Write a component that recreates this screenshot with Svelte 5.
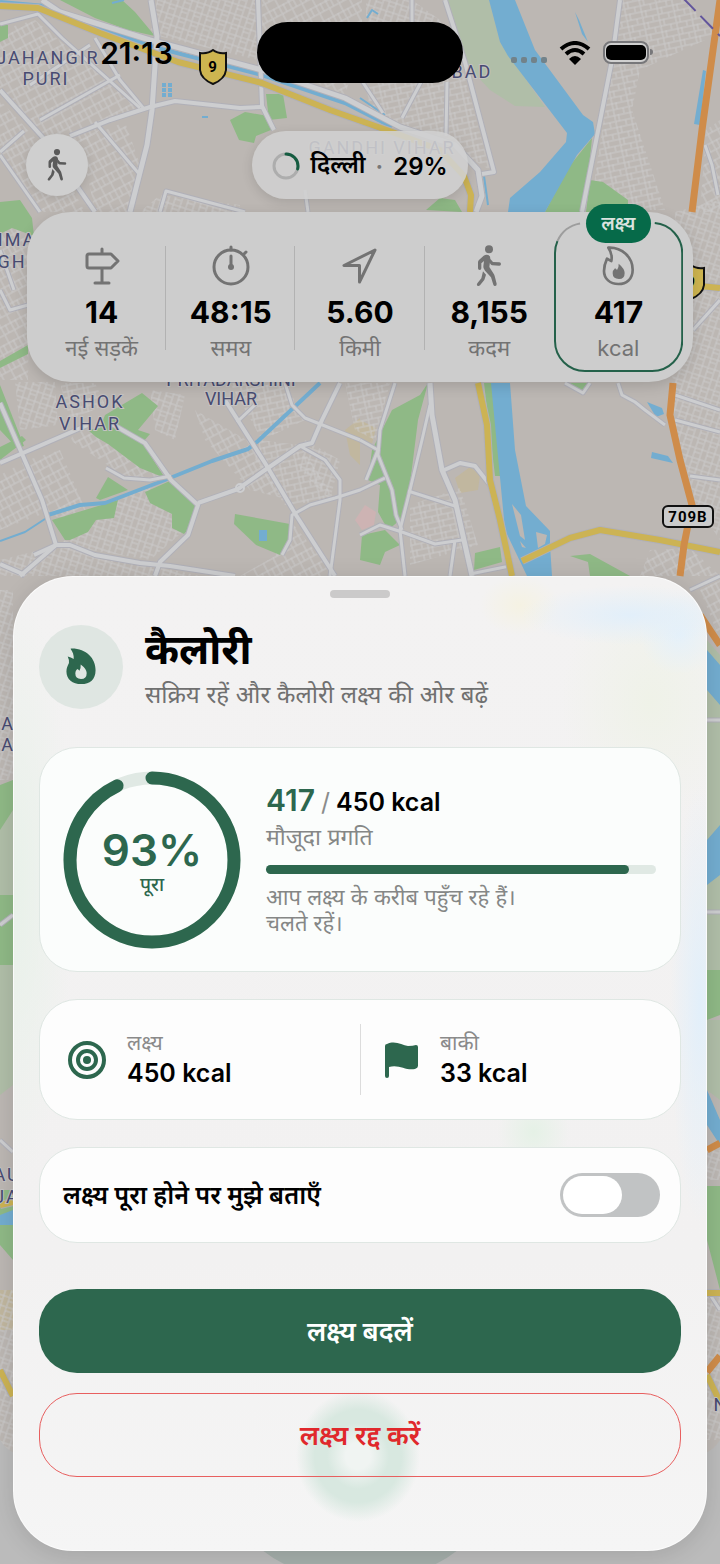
<script>
  const stats = [
    { icon: 'sign', value: '14', label: 'नई सड़कें' },
    { icon: 'watch', value: '48:15', label: 'समय' },
    { icon: 'arrow', value: '5.60', label: 'किमी' },
    { icon: 'walk', value: '8,155', label: 'कदम' },
    { icon: 'flame', value: '417', label: 'kcal', goal: true },
  ];

  const current = 417;
  const target = 450;
  const percent = Math.round((current / target) * 100);
  const cityPercent = 29;

  let notify = $state(false);

  // Map geometry, in map units
  const blocks = [
    { fill: 'streets-a', d: 'M0 30 35 20 140 108 110 118 95 135 60 160 0 90Z' },
    { fill: 'streets-a', d: 'M80 140 125 122 142 170 130 212 95 212Z' },
    { fill: 'streets-a', d: 'M0 100 60 165 85 212H40L0 155Z' },
    { fill: 'streets-b', d: 'M157 0H258V60L150 34Z' },
    { fill: 'streets-a', d: 'M262 0H362V40L345 95 262 60Z' },
    { fill: 'streets-b', d: 'M160 195 240 205V212H140Z' },
    { fill: 'streets-c', d: 'M366 85 460 60 490 170 440 140 370 110Z' },
    { fill: 'streets-b', d: 'M366 0H412L440 20 450 60 366 80Z' },
    { fill: 'streets-c', d: 'M622 0H685L716 35 640 70 632 110 665 210H590Z' },
    { fill: 'streets-a', d: 'M706 130 720 120V212H700Z' },
    { fill: 'streets-a', d: 'M0 210 30 240 28 380 0 380Z' },
    { fill: 'streets-b', d: 'M675 212 720 200V540L696 505 672 415Z' },
    { fill: 'streets-a', d: 'M28 460 60 450 90 520 40 515 0 530V475Z' },
    { fill: 'streets-b', d: 'M15 382 55 382 58 425 20 430Z' },
    { fill: 'streets-c', d: 'M95 383 105 405 70 420 60 383Z' },
    { fill: 'streets-b', d: 'M90 515 150 485 185 530 150 560 60 545Z' },
    { fill: 'streets-a', d: 'M195 410 255 445 290 500 250 490 205 440Z' },
    { fill: 'streets-b', d: 'M150 390 185 395 175 440 155 430Z' },
    { fill: 'streets-c', d: 'M230 383 285 383 305 420 262 440Z' },
    { fill: 'streets-c', d: 'M260 440 300 445 335 500 285 505 255 460Z' },
    { fill: 'streets-b', d: 'M305 440 340 460 330 500 300 470Z' },
    { fill: 'streets-a', d: 'M290 520 335 576H240L275 556Z' },
    { fill: 'streets-c', d: 'M410 505 460 488 478 545 410 565Z' },
    { fill: 'streets-c', d: 'M345 383 390 383 375 440 355 430Z' },
    { fill: 'streets-a', d: 'M80 425 120 445 165 480 130 480 70 440Z' },
    { fill: 'streets-b', d: 'M0 560 60 545 200 576H0Z' },
    { fill: 'streets-a', d: 'M650 550 690 548 720 576H640Z' },
    { fill: 'streets-b', d: 'M0 590H13V780H0Z' },
    { fill: 'streets-a', d: 'M700 590 720 580V640Z' },
    { fill: 'streets-b', d: 'M707 1150H720V1180H707ZM0 1290H13V1450H0ZM707 1290H720V1440H707Z' },
  ];

  const parks = [
    'M60 0H122L135 12 155 36 128 30 95 18Z',
    'M0 25H8V38L0 42Z',
    'M230 120 245 112 268 116 271 130 256 136 254 143 239 140Z',
    'M266 94H283L287 118 269 120Z',
    'M0 202 20 200 32 218 34 236 12 228 0 234Z',
    'M0 361 28 345V354L0 368Z',
    'M0 385 24 446 17 448 0 430Z',
    'M0 447 22 436 26 440 0 460Z',
    'M105 415 142 393 158 406 138 430 150 434 143 442 152 458 165 478 140 468 108 444 96 437 88 430 100 428Z',
    'M96 498 108 477 128 490 100 500Z',
    'M52 520 118 500 114 518 96 520 88 532 70 540 65 540Z',
    'M145 492 172 480 195 505 196 520 184 534 172 528 172 514 150 503Z',
    'M235 514 290 524 288 545 280 555 256 545 234 524Z',
    'M392 410 420 395 428 383 418 420 408 500 400 520 388 530 378 512 380 485 368 480 372 450Z',
    'M362 535 385 530 400 545 385 552 380 565 360 560Z',
    'M484 383H493L502 476 495 476Z',
    'M475 553 500 547 502 562 474 570Z',
    'M570 556 590 554 630 576H590L588 562Z',
    'M592 138 588 180 580 212H545L568 168Z',
    'M590 180 603 182 628 200V212H586Z',
    'M426 210 440 198 455 200 462 212Z',
    'M565 383H590L585 392Z',
    'M0 785 13 780V810L0 830ZM0 895H13V965H0ZM0 1190H13V1260L0 1245Z',
    'M707 970H720V1015L707 1020ZM707 1186H720V1290L707 1240Z',
  ];

  const waters = [
    'M489 0 500 42 508 56 567 133 566 142 540 172 510 198 508 212H545L577 155 595 134 593 122 583 115 535 50 515 0Z',
    'M491 383H510L515 450 526 506 550 531V545L552 576H527L505 530Z',
    'M647 402 662 408 664 414 656 417Z',
    'M652 452 668 456 673 463 651 458Z',
    'M703 70 706 71 700 125 694 124Z',
    'M575 12 579 20 588 42 582 34Z',
    'M259 530H267V541H259Z',
    'M707 650 720 665V705L707 690ZM707 840 720 825V875L707 885ZM707 1090 720 1120V1145L707 1125Z',
    'M0 1215 13 1210V1225H0Z',
  ];

  const roads = [
    { w: 5, d: 'M42 0 60 12 150 40 262 70 345 98 400 127 455 145 478 170 482 196 476 212' },
    { w: 5, d: 'M151 0 157 36 152 110 147 145 130 212' },
    { w: 3, d: 'M0 24 38 14 62 38 140 108' },
    { w: 4, d: 'M70 136 110 120 150 107 175 101 240 108 262 107' },
    { w: 4, d: 'M258 0 262 106 274 130' },
    { w: 4, d: 'M0 90 45 140 95 212' },
    { w: 3, d: 'M0 152 24 131 M0 155 40 212' },
    { w: 3, d: 'M95 38 120 80 145 110 M30 85 90 45 M40 120 120 75 M95 122 140 175' },
    { w: 4, d: 'M445 0 465 62 494 172 482 174' },
    { w: 3, d: 'M412 0V30 M360 78 383 113 M421 82 402 118 M447 82 446 136' },
    { w: 4, d: 'M620 0 612 60 582 212' },
    { w: 3, d: 'M160 212 166 191 245 212 M305 190 308 212' },
    { w: 3, d: 'M705 145 712 165 718 195' },
    { w: 4, d: 'M0 403 42 500 56 545 20 576' },
    { w: 4, d: 'M0 463 90 424 M112 424 145 443 171 480 198 505 188 535 160 562 155 576' },
    { w: 3, d: 'M106 468 124 478 150 480 171 476' },
    { w: 4, d: 'M0 564 25 575 M34 555 56 545 70 545 95 555 140 563 170 566 235 576' },
    { w: 4, d: 'M198 503 238 489 265 470 300 446 312 443 322 420 340 383' },
    { w: 4, d: 'M225 400 265 463 296 515 335 576' },
    { w: 3, d: 'M237 422 257 403 M285 383 292 405 305 418 360 440' },
    { w: 3, d: 'M300 446 325 460 340 480 340 500 330 576' },
    { w: 3, d: 'M282 555 290 540 292 515 310 505 335 498 360 490 385 478' },
    { w: 5, d: 'M430 383 432 415 442 470 455 500 472 576' },
    { w: 3, d: 'M430 405 422 440 410 490 400 530 405 576' },
    { w: 3, d: 'M395 383 380 430 378 455 392 490 396 515 402 530' },
    { w: 3, d: 'M360 440 378 450 366 480 M360 535 380 525 402 532 435 544 462 540 M455 540 450 576' },
    { w: 4, d: 'M442 471 460 463 475 466 490 485' },
    { w: 3, d: 'M408 491 458 507 M470 574 510 566' },
    { w: 3, d: 'M565 383 583 393 590 383 M618 383 622 395 635 402 645 410 665 425' },
    { w: 3, d: 'M675 395 720 410 M675 420 720 432 M690 476 720 480 M690 590 720 576' },
    { w: 3, d: 'M0 290 10 310 28 305 M0 250 14 290 M693 330 720 300' },
    { w: 3, d: 'M0 1140 13 1152 M0 925 13 915 M707 720H720 M707 912H720 M707 1290 720 1310' },
  ];

  const highways = [
    'M0 6 38 8 100 33 178 62 262 83 330 110 395 133 440 150 464 176 471 195 470 212',
    'M478 383 487 425 490 480 500 520 512 576',
    'M522 561 570 538 600 530 660 540 720 552',
    'M690 285 720 288 M0 1370 13 1396 M707 1293H720 M707 1375 720 1402 M0 1205 13 1202',
  ];
</script>

<svelte:head><title>कैलोरी</title></svelte:head>

{#snippet icon(name)}
  {#if name === 'sign'}
    <svg class="icon" viewBox="0 0 44 44" aria-hidden="true">
      <path d="M22 5v4M22 24v14M15 39h14M9 10h22l7 7-7 7H9q-2 0-2-2V12q0-2 2-2Z" />
    </svg>
  {:else if name === 'watch'}
    <svg class="icon" viewBox="0 0 44 44" aria-hidden="true">
      <circle cx="22" cy="23" r="17" />
      <path d="M22 12v11M22 3v3M35 10l2-2" />
      <circle class="solid" cx="22" cy="23" r="3" />
    </svg>
  {:else if name === 'arrow'}
    <svg class="icon" viewBox="0 0 44 44" aria-hidden="true">
      <path d="M37 6 6 21.500h15.500V38Z" />
    </svg>
  {:else if name === 'walk'}
    <svg class="icon" viewBox="-26 -1 132 132" aria-hidden="true">
      <circle class="solid" cx="40" cy="15" r="12" />
      <path class="solid" d="M24 34Q31 29 38 32Q45 35 44 44L41 68L54 88Q56 91 57 95L63 118Q64 124 59 125Q55 126 53 121L46 99L28 79Q22 73 23 66L25 50L17 57V72Q17 77 12 77Q7 77 7 72V54Q7 50 10 47Z" />
      <path class="solid" d="M44 44 52 53 71 54Q76 54 76 59Q76 64 71 64L50 63Q47 63 45 60L40 53Z" />
      <path class="solid" d="M22 81 31 91 27 104Q26 107 24 109L13 123Q9 127 5 124Q2 121 5 117L17 102Z" />
    </svg>
  {:else}
    <svg class="icon" viewBox="0 0 132 132" aria-hidden="true">
      <path class="flame-line" d="M37 11C78 9 110 40 110 77C110 106 91 120 67 120C42 120 24 104 24 81C24 65 28 55 33 44Q39 48 46 51C49 36 46 24 37 11Z" />
      <path class="solid" d="M68 59Q86 74 86 87Q86 105 69 105Q50 105 50 88Q50 79 57 73Q61 75 63 78Q69 71 68 59Z" />
    </svg>
  {/if}
{/snippet}

<div class="screen">
  <svg class="map" viewBox="0 0 720 1564" preserveAspectRatio="xMidYMin slice" aria-hidden="true">
    <defs>
      <pattern id="streets-a" width="11" height="17" patternUnits="userSpaceOnUse" patternTransform="rotate(-28)">
        <path d="M0 1H11M1 0V17M1 9H11M6 0V9" />
      </pattern>
      <pattern id="streets-b" width="13" height="10" patternUnits="userSpaceOnUse" patternTransform="rotate(18)">
        <path d="M0 1H13M1 0V10M7 5H13M7 1V10" />
      </pattern>
      <pattern id="streets-c" width="16" height="12" patternUnits="userSpaceOnUse" patternTransform="rotate(-12)">
        <path d="M0 1H16M1 0V12M5 0V7M1 7H16M11 7V12" />
      </pattern>
    </defs>
    <rect width="720" height="1564" fill="#bcb7b3" />
    <path fill="#b0bea8" d="M445 0H489L500 42 545 107 515 106 490 90 462 60ZM707 640 720 655V970H707ZM707 1020H720V1100L707 1090ZM0 820 13 810V1085L0 1095Z" />
    <path fill="#c1b79f" d="M455 478 470 467 480 475 478 490 460 493ZM345 430 360 418V465L350 455ZM360 420 376 428 372 444 360 440ZM0 1290H13V1330H0Z" />
    <path fill="#cdb3b3" d="M355 520 365 505 376 512 374 525 362 530Z" />
    {#each blocks as block}
      <path fill="url(#{block.fill})" d={block.d} />
    {/each}
    {#each parks as d}<path class="park" {d} />{/each}
    {#each waters as d}<path class="water" {d} />{/each}
    <path fill="#bcb7b3" d="M512 504 521 515 525 540 520 536ZM536 532 547 535 545 544 538 548ZM520 541 526 548 522 547Z" />
    <path class="canal" d="M0 2 45 6 70 18 150 46 262 75 345 103 392 127M48 515 80 505 105 503 165 480 212 461 248 449 258 441 320 383" />
    <path class="canal thin" d="M0 541 25 532 48 517M484 176 488 205M360 98 385 115M112 3 124 0M202 117H208M367 18 372 10 378 14" />
    <path class="canal ponds" d="M164 83V97M170 83V97" />
    {#each roads as road}<path class="casing" stroke-width={road.w + 2} d={road.d} />{/each}
    {#each roads as road}<path class="road" stroke-width={road.w} d={road.d} />{/each}
    <circle class="road" cx="240" cy="488" r="4" stroke-width="2" />
    {#each highways as d}<path class="casing" stroke-width="8" {d} />{/each}
    {#each highways as d}<path class="highway" {d} />{/each}
    <path class="trunk" d="M720 0 713 50 702 130 692 212M673 383 670 415 680 460 692 505 684 545 680 576M700 615 720 645M707 1150 720 1143M707 1372 720 1356" />
    <path class="border-line" d="M683-2 720 36" />
    <g class="places">
      <text x="48" y="64">JAHANGIR</text>
      <text x="46" y="85">PURI</text>
      <text x="472" y="78">BAD</text>
      <text x="17" y="246">IMA</text>
      <text x="12" y="268">GH</text>
      <text class="tight" x="231" y="386">PRIYADARSHINI</text>
      <text class="tight" x="231" y="405">VIHAR</text>
      <text x="90" y="408">ASHOK</text>
      <text x="90" y="430">VIHAR</text>
      <text x="8" y="730">A</text>
      <text x="8" y="751">A</text>
      <text x="7" y="1181">AU</text>
      <text x="7" y="1203">JA</text>
      <text x="-1" y="1466">E</text>
      <text x="721" y="1411">N</text>
      <text x="382" y="154">GANDHI VIHAR</text>
    </g>
    <g class="shield">
      <path d="M200 53Q208 54 213 50Q218 54 226 53V70Q225 79 213 84Q201 79 200 70Z" />
      <text x="213" y="72">9</text>
      <path d="M678 268Q686 269 691 265Q696 269 704 268V285Q703 294 691 299Q679 294 678 285Z" />
      <text x="691" y="287">9</text>
      <rect x="663" y="506" width="50" height="21" rx="5" />
      <text x="688" y="522">709B</text>
    </g>
    <path fill="#bbbbbb" d="M0 1440Q10 1455 24 1455H696Q710 1455 720 1440V1564H0Z" />
    <path fill="#a4aeaa" d="M262 1550Q300 1580 360 1580T458 1550Z" />
  </svg>

  <div class="status">
    <time>21:13</time>
    <div class="island"></div>
    <div class="signals">
      <svg width="36" height="32" viewBox="0 0 36 32" aria-hidden="true">
        <g fill="#72828a">
          <rect y="20" width="6" height="6" rx="2" /><rect x="10" y="20" width="6" height="6" rx="2" />
          <rect x="20" y="20" width="6" height="6" rx="2" /><rect x="30" y="20" width="6" height="6" rx="2" />
        </g>
      </svg>
      <svg width="32" height="24" viewBox="0 0 32 24" aria-hidden="true">
        <path d="M2 8Q16-4 30 8M7 13Q16 5 25 13" fill="none" stroke="#000" stroke-width="4" />
        <path d="M10 18Q16 12 22 18L16 24Z" />
      </svg>
      <svg width="50" height="24" viewBox="0 0 50 24" aria-hidden="true">
        <rect x="1" y="1" width="44" height="21" rx="7" fill="#d0d0d0" stroke="#77777a" stroke-width="2" />
        <rect x="3" y="4" width="40" height="15" rx="5" />
        <path d="M47 8Q50 8 50 11T47 14Z" fill="#77777a" />
      </svg>
    </div>
  </div>

  <div class="topbar">
    <button class="round" aria-label="पैदल">{@render icon('walk')}</button>
    <button class="city">
      <svg width="28" height="28" viewBox="0 0 28 28" aria-hidden="true">
        <circle cx="14" cy="14" r="12" fill="none" stroke="#adadad" stroke-width="3" />
        <circle cx="14" cy="14" r="12" fill="none" stroke="#155c41" stroke-width="3" pathLength="100" stroke-dasharray="{cityPercent} 100" stroke-linecap="round" transform="rotate(-90 14 14)" />
      </svg>
      <span>दिल्ली</span><span class="dot">·</span><span>{cityPercent}%</span>
    </button>
  </div>

  <ul class="stats">
    {#each stats as stat}
      <li class:goal={stat.goal}>
        {#if stat.goal}
          <svg class="outline" aria-hidden="true">
            <rect class="rest" x="1" y="1" rx="30" pathLength="100" />
            <rect class="done" x="1" y="1" rx="30" pathLength="100" />
          </svg>
          <span class="badge">लक्ष्य</span>
        {/if}
        {@render icon(stat.icon)}
        <strong>{stat.value}</strong>
        <span class="label">{stat.label}</span>
      </li>
    {/each}
  </ul>

  <main class="sheet">
    <div class="handle"></div>

    <header>
      <div class="emblem">
        <svg width="38" height="38" viewBox="0 0 120 120" aria-hidden="true">
          <path fill="#2d674e" d="M27 2C75 0 106 32 106 70C106 99 88 114 61 114C33 114 14 99 14 74C14 63 18 55 22 47Q23 37 18 27Q28 29 37 35C38 22 34 12 27 2Z" />
          <path fill="#dfe6e2" d="M59 52Q77 65 78 79Q78 98 60 98Q42 98 42 80Q42 71 48 66Q53 67 55 72Q60 64 59 52Z" />
        </svg>
      </div>
      <div class="heading">
        <h1>कैलोरी</h1>
        <p>सक्रिय रहें और कैलोरी लक्ष्य की ओर बढ़ें</p>
      </div>
    </header>

    <section class="card progress">
      <div class="ring">
        <svg viewBox="0 0 178 178" aria-hidden="true">
          <circle cx="89" cy="89" r="82" stroke="#e0e9e4" />
          <circle cx="89" cy="89" r="82" stroke="#2d674e" pathLength="100" stroke-dasharray="{percent} 100" stroke-linecap="round" transform="rotate(-90 89 89)" />
        </svg>
        <div class="ring-text">
          <strong>{percent}%</strong>
          <span>पूरा</span>
        </div>
      </div>
      <div class="detail">
        <div class="amount"><strong>{current}</strong><span>/</span><b>{target} kcal</b></div>
        <div class="caption">मौजूदा प्रगति</div>
        <div class="bar" role="progressbar" aria-label="मौजूदा प्रगति" aria-valuenow={percent}>
          <div class="bar-fill" style="width: {percent}%"></div>
        </div>
        <p>आप लक्ष्य के करीब पहुँच रहे हैं।<br />चलते रहें।</p>
      </div>
    </section>

    <section class="card split">
      <div class="fact">
        <svg width="38" height="38" viewBox="0 0 38 38" aria-hidden="true">
          <g fill="none" stroke="#2d674e" stroke-width="4">
            <circle cx="19" cy="19" r="17" /><circle cx="19" cy="19" r="9" />
          </g>
          <circle cx="19" cy="19" r="4" fill="#2d674e" />
        </svg>
        <div><span>लक्ष्य</span><strong>{target} kcal</strong></div>
      </div>
      <div class="fact">
        <svg width="34" height="38" viewBox="0 0 34 38" aria-hidden="true">
          <path fill="#2d674e" d="M0 5Q0 3 2 3C10-1 17 4 23 5Q28 5 31 4Q33 4 33 6V25Q33 27 30 28C21 30 14 23 4 26V35Q4 37 2 37T0 35Z" />
        </svg>
        <div><span>बाकी</span><strong>{target - current} kcal</strong></div>
      </div>
    </section>

    <section class="card notify">
      <label for="notify">लक्ष्य पूरा होने पर मुझे बताएँ</label>
      <input id="notify" type="checkbox" role="switch" bind:checked={notify} />
    </section>

    <div class="actions">
      <button class="primary">लक्ष्य बदलें</button>
      <button class="danger">लक्ष्य रद्द करें</button>
    </div>
  </main>
</div>

<style>
  :global(body) {
    background: #bcb7b3;
  }

  .screen {
    position: relative;
    display: flex;
    flex-direction: column;
    min-height: 100vh;
    box-sizing: border-box;
    padding-bottom: 13px;
    overflow: hidden;
    font-family: Inter, "Noto Sans Devanagari", "Noto Sans", sans-serif;
    color: #000;
  }

  .screen * {
    box-sizing: border-box;
  }

  button {
    font: inherit;
    color: inherit;
    border: 0;
    padding: 0;
    cursor: pointer;
  }

  h1, p, ul {
    margin: 0;
    padding: 0;
  }

  /* Map */
  .map {
    position: absolute;
    inset: 0;
    width: 100%;
    height: 100%;
  }

  .map pattern path {
    fill: none;
    stroke: #cbcaca;
    stroke-width: 1;
  }

  .park { fill: #8fb986; }
  .water { fill: #73add0; }

  .canal, .casing, .road, .highway, .trunk, .border-line {
    fill: none;
    stroke-linejoin: round;
  }

  .canal { stroke: #73add0; stroke-width: 4; }
  .canal.thin { stroke-width: 2; }
  .canal.ponds { stroke-dasharray: 4 1; }
  .casing { stroke: #b0b0b8; }
  .road { stroke: #cdced0; }
  .highway { stroke: #ccb354; stroke-width: 6; }
  .trunk { stroke: #cf8c4a; stroke-width: 7; }
  .border-line { stroke: #62559c; stroke-width: 2; stroke-dasharray: 18 7; }

  .places text {
    font-family: Roboto, sans-serif;
    font-size: 18px;
    letter-spacing: 2px;
    text-anchor: middle;
    fill: #484b71;
    stroke: #c4c2c2;
    stroke-width: 2px;
    paint-order: stroke;
  }

  .places .tight {
    letter-spacing: normal;
  }

  .shield path { fill: #ceb550; stroke: #111; stroke-width: 2; }
  .shield rect { fill: #cbcbcb; stroke: #111; stroke-width: 2; }

  .shield text {
    font-family: Roboto, sans-serif;
    font-size: 15px;
    font-weight: 700;
    letter-spacing: 1px;
    text-anchor: middle;
  }

  /* Status bar and top controls */
  .status {
    position: relative;
    display: grid;
    grid-template-columns: 1fr 206px 1fr;
    align-items: center;
    margin-top: 22px;
  }

  .status time {
    padding-left: 16px;
    text-align: center;
    font-size: 30px;
    font-weight: 600;
  }

  .island {
    height: 61px;
    border-radius: 31px;
    background: #000;
  }

  .signals {
    display: flex;
    align-items: center;
    gap: 12px;
    padding-left: 48px;
  }

  .topbar {
    position: relative;
    display: grid;
    grid-template-columns: 1fr auto 1fr;
    align-items: center;
    margin: 48px 26px 13px;
  }

  .round {
    display: grid;
    place-items: center;
    width: 62px;
    height: 62px;
    border-radius: 50%;
    background: #cfcfcf;
    color: #5a5a5a;
    box-shadow: 0 2px 10px rgba(0, 0, 0, 0.12);
  }

  .round .icon {
    width: 34px;
    height: 34px;
  }

  .city {
    display: flex;
    align-items: center;
    gap: 10px;
    height: 68px;
    padding: 2px 20px 0;
    border-radius: 34px;
    background: rgba(208, 208, 208, 0.88);
    box-shadow: 0 3px 12px rgba(0, 0, 0, 0.12);
    font-size: 24px;
    font-weight: 600;
  }

  .dot {
    color: #777;
  }

  /* Stats */
  .icon {
    width: 44px;
    height: 44px;
    fill: none;
    stroke: currentColor;
    stroke-width: 3;
    stroke-linecap: round;
    stroke-linejoin: round;
  }

  .icon .solid {
    fill: currentColor;
    stroke: none;
  }

  .flame-line {
    stroke-width: 8;
  }

  .stats {
    position: relative;
    display: grid;
    grid-template-columns: repeat(5, 1fr);
    margin: 0 27px;
    padding: 10px;
    border-radius: 44px;
    background: #cdcdcd;
    box-shadow: 0 4px 14px rgba(0, 0, 0, 0.14);
    list-style: none;
  }

  .stats li {
    position: relative;
    display: flex;
    flex-direction: column;
    align-items: center;
    height: 150px;
    padding-top: 22px;
    color: #737373;
  }

  .stats li:nth-child(-n + 3)::after {
    content: "";
    position: absolute;
    right: 0;
    top: 24px;
    bottom: 22px;
    width: 1px;
    background: #b2b2b2;
  }

  .stats strong {
    margin-top: 4px;
    line-height: 40px;
    font-size: 30px;
    font-weight: 700;
    color: #000;
  }

  .label {
    font-size: 22px;
    line-height: 32px;
  }

  .outline {
    position: absolute;
    inset: 0;
    width: 100%;
    height: 100%;
  }

  .outline rect {
    width: calc(100% - 2px);
    height: calc(100% - 2px);
    fill: none;
    stroke-width: 2;
  }

  .outline .rest {
    stroke: #9d9d9d;
    stroke-dasharray: 6 100;
    stroke-dashoffset: -93;
  }

  .outline .done {
    stroke: #24614a;
    stroke-dasharray: 79 100;
    stroke-dashoffset: -14;
  }

  .badge {
    position: absolute;
    top: -18px;
    height: 39px;
    padding: 0 15px;
    border-radius: 20px;
    background: #066a49;
    color: #dbe3df;
    font-size: 19px;
    font-weight: 600;
    line-height: 39px;
  }

  /* Sheet */
  .sheet {
    position: relative;
    margin: auto 13px 0;
    padding: 14px 26px 74px;
    border-radius: 60px;
    background:
      radial-gradient(ellipse 62px 66px at 345px 880px, #f0f4f2 20%, #d8e8e0 50%, #d8e8e0 70%, transparent),
      radial-gradient(ellipse 110px 30px at 89% 4%, #e2effa, transparent),
      radial-gradient(ellipse 40px 40px at 96% 6%, #e5f1fa, transparent),
      radial-gradient(ellipse 30px 220px at 99% 44%, #e2effa, transparent),
      radial-gradient(ellipse 90px 120px at 92% 13%, #eff2e8, transparent),
      radial-gradient(ellipse 40px 30px at 73% 3%, #f5f2e3, transparent),
      radial-gradient(ellipse 60px 300px at 0 32%, #e8f1e9, transparent),
      radial-gradient(ellipse 36px 40px at 75% 57%, #e5f1e6, transparent),
      linear-gradient(#f3f2f2, #f2f1f1 70%, #f5f5f5);
    box-shadow: inset 0 0 0 1px #fbfbfb, 0 4px 24px rgba(0, 0, 0, 0.12);
  }

  .handle {
    width: 60px;
    height: 8px;
    margin: 0 auto 27px;
    border-radius: 4px;
    background: #cbcaca;
  }

  header {
    display: flex;
    align-items: center;
    gap: 22px;
    height: 84px;
    margin-bottom: 38px;
  }

  .emblem {
    display: grid;
    place-items: center;
    flex: none;
    width: 84px;
    height: 84px;
    border-radius: 50%;
    background: #dfe6e2;
  }

  .heading {
    padding-top: 6px;
  }

  h1 {
    margin-bottom: 2px;
    font-size: 41px;
    font-weight: 700;
    line-height: 48px;
  }

  header p {
    font-size: 24px;
    line-height: 40px;
    color: #707070;
  }

  .card {
    margin-bottom: 27px;
    border: 1px solid #dfe7e3;
    border-radius: 38px;
    background: #fdfdfd;
  }

  .progress {
    display: flex;
    align-items: center;
    gap: 25px;
    height: 225px;
    padding: 0 24px 0 23px;
    background: #fbfdfc;
  }

  .ring {
    position: relative;
    flex: none;
    width: 178px;
    height: 178px;
    color: #2d674e;
  }

  .ring svg {
    display: block;
    fill: none;
    stroke-width: 13;
  }

  .ring-text {
    position: absolute;
    inset: 0;
    display: flex;
    flex-direction: column;
    align-items: center;
    justify-content: center;
    padding-top: 6px;
  }

  .ring-text strong {
    font-size: 44px;
    font-weight: 600;
    line-height: 44px;
  }

  .ring-text span {
    font-size: 19px;
    font-weight: 500;
    line-height: 26px;
  }

  .detail {
    flex: 1;
    min-width: 0;
    padding-bottom: 3px;
  }

  .amount {
    display: flex;
    align-items: baseline;
    gap: 6px;
    line-height: 38px;
    font-size: 25px;
    color: #8a8c8b;
  }

  .amount strong {
    font-size: 30px;
    font-weight: 600;
    color: #2d674e;
  }

  .amount b {
    font-weight: 600;
    color: #000;
  }

  .caption {
    font-size: 23px;
    line-height: 33px;
    color: #858786;
  }

  .bar {
    height: 9px;
    margin: 11px 0 10px;
    border-radius: 5px;
    background: #e0e9e4;
  }

  .bar-fill {
    height: 100%;
    border-radius: 5px;
    background: #2d674e;
  }

  .detail p {
    font-size: 22px;
    line-height: 26px;
    color: #858786;
  }

  .split {
    display: grid;
    grid-template-columns: 1fr 1fr;
    height: 121px;
    padding: 24px 0;
  }

  .fact {
    display: flex;
    align-items: center;
    gap: 21px;
    padding-left: 28px;
  }

  .fact div {
    padding-bottom: 3px;
  }

  .fact + .fact {
    padding-left: 24px;
    border-left: 1px solid #dcdcdc;
  }

  .fact span,
  .fact strong {
    display: block;
    line-height: 30px;
  }

  .fact span {
    font-size: 21px;
    color: #8a8a8a;
  }

  .fact strong {
    font-size: 25px;
    font-weight: 600;
  }

  .notify {
    display: flex;
    align-items: center;
    justify-content: space-between;
    height: 96px;
    padding: 0 20px 0 23px;
    margin-bottom: 46px;
  }

  .notify label {
    padding-top: 3px;
    font-size: 25px;
    font-weight: 600;
  }

  .notify input {
    appearance: none;
    width: 100px;
    height: 44px;
    margin: 0;
    padding: 3px;
    border-radius: 22px;
    background: #c1c3c4;
    cursor: pointer;
  }

  .notify input::before {
    content: "";
    display: block;
    width: 59px;
    height: 38px;
    border-radius: 19px;
    background: #fff;
    transition: margin 0.2s;
  }

  .notify input:checked {
    background: #2d674e;
  }

  .notify input:checked::before {
    margin-left: 35px;
  }

  .actions {
    display: grid;
    gap: 20px;
  }

  .actions button {
    height: 84px;
    padding-top: 5px;
    border-radius: 38px;
    font-size: 27px;
    font-weight: 600;
  }

  .primary {
    background: #2d674e;
    color: #fff;
  }

  .actions .danger {
    border: 1px solid #e85f5f;
    background: none;
    color: #e0282c;
  }
</style>
